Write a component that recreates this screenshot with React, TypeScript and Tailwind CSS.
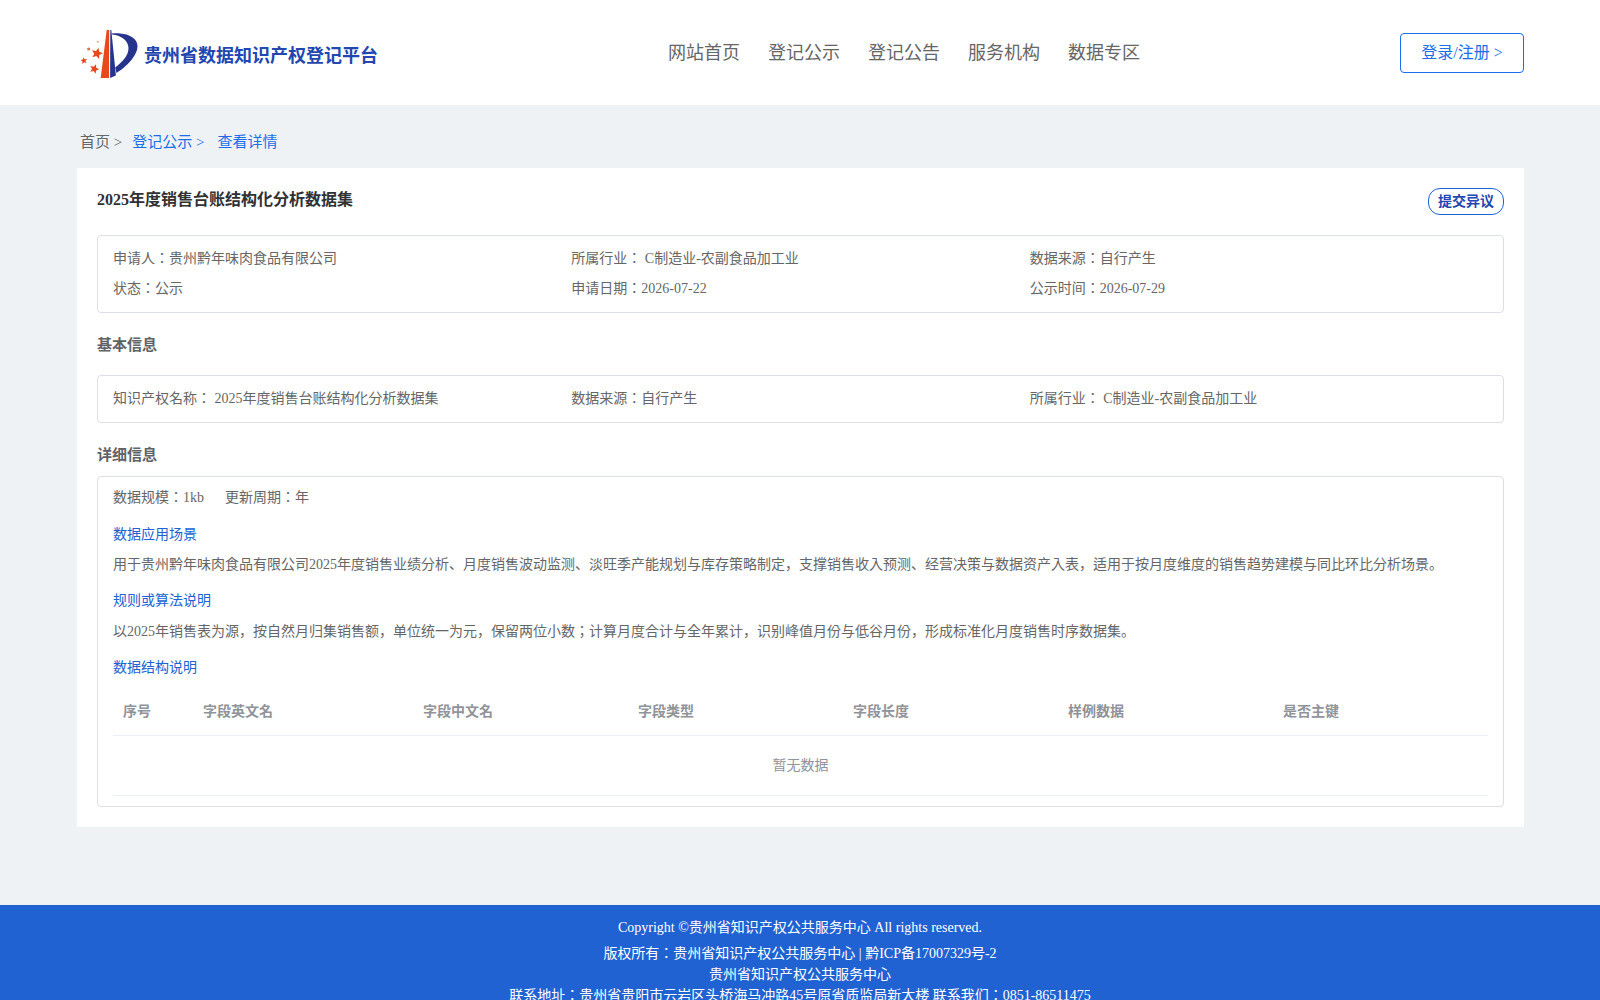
import React from 'react';

const cjk = 'font-["Liberation_Serif","Noto_Sans_CJK_JP",serif]';

const columns = ['序号', '字段英文名', '字段中文名', '字段类型', '字段长度', '样例数据', '是否主键'];
const navItems = ['网站首页', '登记公示', '登记公告', '服务机构', '数据专区'];

// five point star centred on cx, cy
const star = (cx: number, cy: number, r: number, rot = 0) => {
  const pts: string[] = [];
  for (let i = 0; i < 10; i++) {
    const rad = i % 2 === 0 ? r : r * 0.45;
    const a = ((-90 + rot + i * 36) * Math.PI) / 180;
    pts.push(`${(cx + rad * Math.cos(a)).toFixed(2)},${(cy + rad * Math.sin(a)).toFixed(2)}`);
  }
  return pts.join(' ');
};

const Logo = () => (
  <svg width="58" height="50" viewBox="0 0 58 50" className="shrink-0">
    <polygon points="25.7,1 28.2,1 28,49 19.7,49" fill="#e8481c" />
    <polygon points="29.3,1 30.3,1 34.9,46.5 29.1,49" fill="#27348b" />
    <path d="M30.7 4.5 C40 3 56.5 6 56.5 17 C56.5 27 45 38 35.5 44 L34.2 38.5 C41 33 47.5 27 47.5 19 C47.5 12 41 6.5 31 5.4 Z" fill="#27348b" />
    <polygon points={star(16, 24.5, 6, 15)} fill="#e8481c" />
    <polygon points={star(2.9, 31.7, 3.6, -10)} fill="#e8481c" />
    <polygon points={star(13.3, 40, 5, 20)} fill="#e8481c" />
    <circle cx="7.7" cy="20" r="1.6" fill="#e8704c" />
    <circle cx="16.7" cy="12.7" r="1" fill="#ee9a80" />
  </svg>
);

const InfoRow = ({ items }: { items: string[] }) => (
  <div className="grid grid-cols-3">
    {items.map((t) => (
      <div key={t} className="h-[30px] leading-[30px]">{t}</div>
    ))}
  </div>
);

const Heading = ({ children }: { children: React.ReactNode }) => (
  <div className="text-[15px] leading-[20px] font-bold text-[#606266]">{children}</div>
);

const BlueLabel = ({ children }: { children: React.ReactNode }) => (
  <div className="text-[14px] leading-[20px] text-[#2162d3]">{children}</div>
);

export default function App() {
  return (
    <div className={`${cjk} h-[1000px] overflow-hidden bg-[#eff2f5] flex flex-col`}>
      <header className="h-[105px] bg-white shrink-0 pl-[77px] pr-[76px] flex items-center">
        <div className="w-[591px] pl-[4px] flex items-center mt-[2px] font-['Liberation_Sans','Noto_Sans_CJK_SC',sans-serif]">
          <Logo />
          <span className="ml-[5px] mt-[5px] text-[18px] leading-[26px] font-bold text-[#2346b0] whitespace-nowrap">贵州省数据知识产权登记平台</span>
        </div>
        <nav className="flex gap-[28px] text-[18px] leading-[26px] text-[#666666]">
          {navItems.map((n) => (
            <span key={n}>{n}</span>
          ))}
        </nav>
        <button className="ml-auto w-[124px] h-[40px] rounded-[4px] border border-[#1a6fe8] bg-white text-[16px] text-[#1a6fe8]">
          登录/注册 &gt;
        </button>
      </header>

      <main className="flex-1 px-[77px] min-h-0">
        <div className="h-[63px] pl-[3px] flex items-center text-[15px] pt-[12px]">
          <span className="text-[#666666]">首页 &gt;</span>
          <span className="ml-[10px] text-[#1a6fe8]">登记公示 &gt;</span>
          <span className="ml-[13px] text-[#1a6fe8]">查看详情</span>
        </div>

        <div className="bg-white w-[1447px] h-[659px] px-[20px] pt-[20px]">
          <div className="flex justify-between items-start h-[47px]">
            <h1 className="text-[16px] leading-[24px] font-bold text-[#303133]">2025年度销售台账结构化分析数据集</h1>
            <button className="w-[76px] h-[27px] rounded-[12px] border border-[#1a62d6] text-[14px] font-bold text-[#2346b0] leading-none">提交异议</button>
          </div>

          <div className="h-[78px] border border-[#dcdfe6] rounded-[4px] px-[15px] py-[8px] text-[14px] text-[#666666]">
            <InfoRow items={['申请人：贵州黔年味肉食品有限公司', '所属行业： C制造业-农副食品加工业', '数据来源：自行产生']} />
            <InfoRow items={['状态：公示', '申请日期：2026-07-22', '公示时间：2026-07-29']} />
          </div>

          <div className="mt-[22px] mb-[20px]"><Heading>基本信息</Heading></div>

          <div className="h-[48px] border border-[#dcdfe6] rounded-[4px] px-[15px] py-[8px] text-[14px] text-[#666666]">
            <InfoRow items={['知识产权名称： 2025年度销售台账结构化分析数据集', '数据来源：自行产生', '所属行业： C制造业-农副食品加工业']} />
          </div>

          <div className="mt-[22px] mb-[11px]"><Heading>详细信息</Heading></div>

          <div className="h-[331px] border border-[#dcdfe6] rounded-[4px] px-[15px] text-[14px] text-[#666666]">
            <div className="h-[48px] leading-[42px] flex gap-[21px]">
              <span>数据规模：1kb</span>
              <span>更新周期：年</span>
            </div>
            <BlueLabel>数据应用场景</BlueLabel>
            <p className="mt-[10px] leading-[20px]">用于贵州黔年味肉食品有限公司2025年度销售业绩分析、月度销售波动监测、淡旺季产能规划与库存策略制定，支撑销售收入预测、经营决策与数据资产入表，适用于按月度维度的销售趋势建模与同比环比分析场景。</p>
            <div className="mt-[16px]"><BlueLabel>规则或算法说明</BlueLabel></div>
            <p className="mt-[11px] leading-[20px]">以2025年销售表为源，按自然月归集销售额，单位统一为元，保留两位小数；计算月度合计与全年累计，识别峰值月份与低谷月份，形成标准化月度销售时序数据集。</p>
            <div className="mt-[16px]"><BlueLabel>数据结构说明</BlueLabel></div>
            <div className="mt-[11px] pb-[1px] grid grid-cols-[80px_220px_215px_215px_215px_215px_215px] h-[47px] items-center border-b border-[#ebeef5] font-bold text-[#909399]">
              {columns.map((c) => (
                <div key={c} className="px-[10px]">{c}</div>
              ))}
            </div>
            <div className="h-[60px] flex items-center justify-center border-b border-[#ebeef5] text-[#909399]">暂无数据</div>
          </div>
        </div>
      </main>

      <footer className="h-[95px] shrink-0 bg-[#2162d3] text-white text-center text-[14px] pt-[12px]">
        <div className="leading-[22px] mb-[4px]">Copyright ©贵州省知识产权公共服务中心 All rights reserved.</div>
        <div className="leading-[21px]">版权所有：贵州省知识产权公共服务中心 | 黔ICP备17007329号-2</div>
        <div className="leading-[21px]">贵州省知识产权公共服务中心</div>
        <div className="leading-[21px]">联系地址：贵州省贵阳市云岩区头桥海马冲路45号原省质监局新大楼 联系我们：0851-86511475</div>
      </footer>
    </div>
  );
}
